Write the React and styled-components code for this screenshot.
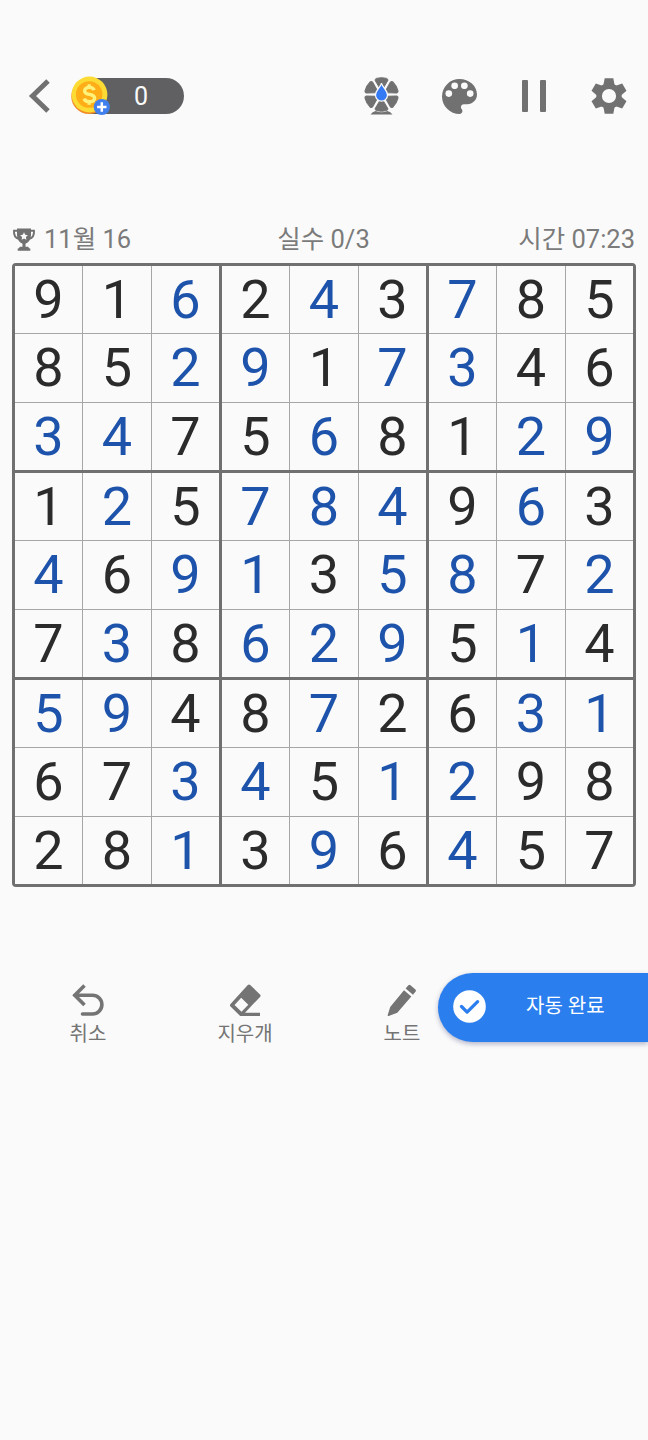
import React from "react";
import styled, { createGlobalStyle } from "styled-components";

const GlobalStyle = createGlobalStyle`
  * { box-sizing: border-box; }
  body { margin: 0; background: #fafafa; }
`;

const GRAY = "#717171";
const FONT = `Roboto, "Noto Sans CJK KR", sans-serif`;

const Screen = styled.main`
  width: 648px;
  min-height: 1440px;
  padding-top: 76px;
  background: #fafafa;
  font-family: ${FONT};
  color: ${GRAY};
`;

const Header = styled.header`
  display: flex;
  align-items: center;
  justify-content: space-between;
  height: 40px;
  padding: 0 21px 0 28px;
`;

const HeaderGroup = styled.div`
  display: flex;
  align-items: center;
  gap: ${(p) => p.$gap}px;
`;

const IconButton = styled.button`
  display: flex;
  align-items: center;
  justify-content: center;
  width: ${(p) => p.$width}px;
  height: 40px;
  padding: 0;
  border: 0;
  background: none;
  color: inherit;
  svg { display: block; flex: none; }
`;

const CoinPill = styled.div`
  display: flex;
  align-items: center;
  width: 114px;
  height: 40px;
`;

const CoinIcon = styled.svg`
  position: relative;
  flex: none;
  width: 41px;
  height: 42px;
`;

const CoinCount = styled.span`
  flex: 1;
  height: 36px;
  margin-left: -22px;
  padding-left: 45px;
  border-radius: 0 18px 18px 0;
  background: #606062;
  color: #fafafa;
  font-size: 25px;
  line-height: 38px;
`;

const StatusRow = styled.section`
  display: grid;
  grid-template-columns: 1fr auto 1fr;
  align-items: center;
  height: 36px;
  margin: 105px 13px 6px 12px;
  font-size: 25.5px;
  line-height: 37px;
`;

const Status = styled.div`
  display: flex;
  align-items: center;
  justify-content: ${(p) => p.$align || "flex-start"};
  gap: 8px;
  white-space: pre;
  color: #7b7b7b;
`;

const Board = styled.section`
  display: grid;
  grid-template-columns: repeat(3, 204px);
  grid-template-rows: repeat(3, 204px);
  gap: 3px;
  width: 624px;
  height: 624px;
  margin: 0 12px;
  border: 3px solid #707070;
  border-radius: 4px;
  background: #707070;
`;

const Box = styled.div`
  display: grid;
  grid-template-columns: 67px 68px 67px;
  grid-template-rows: 67px 68px 67px;
  gap: 1px;
  background: #a6a6a6;
`;

const Cell = styled.div`
  background: #fafafa;
  color: ${(p) => (p.$filled ? "#1d53ab" : "#2b2b2b")};
  font-size: 54px;
  line-height: 68px;
  height: 100%;
  overflow: hidden;
  text-align: center;
`;

const Toolbar = styled.nav`
  position: relative;
  display: grid;
  grid-template-columns: repeat(3, 157px);
  height: 69px;
  margin-top: 86px;
  padding-left: 9.5px;
`;

const Tool = styled.button`
  display: flex;
  flex-direction: column;
  align-items: center;
  padding: 11px 0 0;
  border: 0;
  background: none;
  color: #747474;
  font-family: inherit;
  font-size: 20px;
  line-height: 28px;
  svg { display: block; margin-bottom: 4px; }
`;

const AutoComplete = styled.button`
  position: absolute;
  right: 0;
  top: 0;
  display: flex;
  align-items: center;
  width: 210px;
  height: 69px;
  padding: 0 0 2px 15px;
  gap: 40px;
  border: 0;
  border-radius: 35px 0 0 35px;
  background: #2a7eee;
  box-shadow: 0 2px 5px rgba(40, 50, 110, 0.35);
  color: #fff;
  font-family: inherit;
  font-size: 20px;
  line-height: 28px;
  white-space: nowrap;
`;

const AutoLabel = styled.span`
  padding-bottom: 1px;
`;

const BackIcon = () => (
  <svg width="22" height="36" viewBox="0 0 22 36" fill="none" stroke="currentColor" strokeWidth="5">
    <path d="M20 3 4.5 18 20 33" />
  </svg>
);

const Coin = () => (
  <CoinIcon viewBox="0 0 41 42">
    <circle cx="18.800" cy="21.500" r="17.500" fill="#f28c28" />
    <circle cx="19.500" cy="19.500" r="17.900" fill="#fddb35" />
    <circle cx="19.200" cy="19.500" r="13.300" fill="#ffae17" />
    <path
      d="M24.200 15.200c-.8-2-2.700-2.800-4.800-2.800-2.800 0-4.800 1.300-4.800 3.500 0 5 10 2.100 10 7.200 0 2.400-2.200 3.700-5.100 3.700-2.600 0-4.600-1.100-5.400-3.200M19.200 9.300v3.200M19.200 26.600v3.200"
      fill="none"
      stroke="#fff27b"
      strokeWidth="3.4"
    />
    <circle cx="31.800" cy="32" r="8.100" fill="#3f7fee" />
    <path d="M27.100 32h9.400M31.800 27.300v9.400" stroke="#fff" strokeWidth="2.500" />
  </CoinIcon>
);

const petal = "M-1.8-6.4-6.3-14Q-6.6-15.6-5.2-16.1 0-17.500 5.200-16.100 6.600-15.600 6.300-14L1.800-6.400Z";

const FanIcon = () => (
  <svg width="36" height="40" viewBox="-17.500 -18.500 36 40">
    {[0, 60, 120, 180, 240, 300].map((a) => (
      <path key={a} d={petal} fill="currentColor" stroke="currentColor" strokeWidth="1" strokeLinejoin="round" transform={`rotate(${a})`} />
    ))}
    <path d="M-11 20Q-9 17-6 16.500 0 19 6 16.500 9 17 11 20Z" fill="currentColor" />
    <path d="M0-11.300C1-6.800 6-4.200 6 .6A6 6 0 0 1-6 .6C-6-4.200-1-6.800 0-11.300Z" fill="#347af5" stroke="#fafafa" strokeWidth="1.200" />
  </svg>
);

const PaletteIcon = () => (
  <svg width="35" height="35" viewBox="3 3 18 18" fill="currentColor">
    <path d="M12 3a9 9 0 0 0 0 18c.83 0 1.5-.67 1.5-1.5 0-.39-.15-.74-.39-1.01-.23-.26-.38-.61-.38-.99 0-.83.67-1.5 1.5-1.5H16c2.76 0 5-2.24 5-5 0-4.42-4.03-8-9-8zm-5.5 9c-.83 0-1.5-.67-1.5-1.5S5.67 9 6.5 9 8 9.67 8 10.5 7.33 12 6.5 12zm3-4C8.67 8 8 7.33 8 6.5S8.67 5 9.5 5s1.5.67 1.5 1.5S10.33 8 9.5 8zm5 0c-.83 0-1.5-.67-1.5-1.5S13.67 5 14.5 5s1.5.67 1.5 1.5S15.33 8 14.5 8zm3 4c-.83 0-1.5-.67-1.5-1.5S16.67 9 17.5 9s1.5.67 1.5 1.5-.67 1.5-1.5 1.5z" />
    <g fill="#fafafa">
      <circle cx="6.500" cy="10.500" r="1.700" />
      <circle cx="9.500" cy="6.500" r="1.700" />
      <circle cx="14.500" cy="6.500" r="1.700" />
      <circle cx="17.500" cy="10.500" r="1.700" />
    </g>
  </svg>
);

const PauseIcon = () => (
  <svg width="26" height="32" viewBox="0 0 26 32" fill="currentColor">
    <rect width="6" height="32" rx="1" />
    <rect x="18" width="6" height="32" rx="1" />
  </svg>
);

const GearIcon = () => (
  <svg width="36" height="36" viewBox="-18 -18 36 36" fill="currentColor">
    {[0, 60, 120, 180, 240, 300].map((a) => (
      <path key={a} d="M-4.3-17.7H4.3L5.6-11H-5.6Z" transform={`rotate(${a})`} />
    ))}
    <circle r="9.9" fill="none" stroke="currentColor" strokeWidth="5.6" />
  </svg>
);

const TrophyIcon = () => (
  <svg width="24" height="24" viewBox="0 0 24 24">
    <path d="M5.5 2.8H2q-.5 6.7 5 8.2M18.500 2.800H22q.5 6.700-5 8.200" fill="none" stroke={GRAY} strokeWidth="1.9" />
    <path d="M5 .5h14v7q-.7 6.500-5.500 8.200v3.100h2.500l1.500 1.800h.8v2.200H5.700v-2.200h.8l1.500-1.800h2.500v-3.100Q5.700 14 5 7.500Z" fill={GRAY} />
    <path d="m12 4.300 1.200 2.500 2.700.4-2 1.900.5 2.700-2.400-1.300-2.400 1.300.5-2.700-2-1.900 2.700-.4Z" fill="#fafafa" />
  </svg>
);

const UndoIcon = () => (
  <svg width="32" height="32" viewBox="0 0 32 32" fill="none" stroke="currentColor" strokeWidth="3.6">
    <path d="M12.500 1.500 2.800 11.200 12.500 21" />
    <path d="M3 11.200H20.500a9.200 9.200 0 0 1 0 18.800H10.500" strokeLinecap="round" />
  </svg>
);

const EraserIcon = () => (
  <svg width="32" height="32" viewBox="0 0 32 32" fill="currentColor">
    <path
      fillRule="evenodd"
      d="M18.800 1q1.200-1.200 2.400 0l9.800 9.500q1.200 1.200 0 2.400L16 28.700H31v3.300H11.200L1.500 22.500q-1.200-1.200 0-2.500ZM12.200 13.800 5.500 21 12.500 27.800 19.300 20.800Z"
    />
  </svg>
);

const PencilIcon = () => (
  <svg width="32" height="32" viewBox="0 0 32 32" fill="currentColor">
    <path d="m18 6.300 7.300 6.300L11.300 28.800 2.700 32q-1.200.2-1-1L4.200 23ZM19.600 4.500l2.800-3.200q1-1 2.100-.1l4.900 4.300q1 1 .2 2.100L27 10.800Z" />
  </svg>
);

const CheckIcon = () => (
  <svg width="33" height="33" viewBox="0 0 33 33">
    <circle cx="16.500" cy="16.500" r="16.300" fill="#fff" />
    <path d="m8.500 16.500 5.600 5.600 10.500-10.400" fill="none" stroke="#2a7eee" strokeWidth="3.300" strokeLinecap="round" strokeLinejoin="round" />
  </svg>
);

// Digits entered by the player are prefixed with a dot; the rest are givens.
const ROWS = [
  "9 1 .6 2 .4 3 .7 8 5",
  "8 5 .2 .9 1 .7 .3 4 6",
  ".3 .4 7 5 .6 8 1 .2 .9",
  "1 .2 5 .7 .8 .4 9 .6 3",
  ".4 6 .9 .1 3 .5 .8 7 .2",
  "7 .3 8 .6 .2 .9 5 .1 4",
  ".5 .9 4 8 .7 2 6 .3 .1",
  "6 7 .3 .4 5 .1 .2 9 8",
  "2 8 .1 3 .9 6 .4 5 7",
].map((row) => row.split(" "));

const INDEXES = [0, 1, 2, 3, 4, 5, 6, 7, 8];

const SudokuBoard = () => (
  <Board>
    {INDEXES.map((box) => (
      <Box key={box}>
        {INDEXES.map((i) => {
          const value = ROWS[Math.floor(box / 3) * 3 + Math.floor(i / 3)][(box % 3) * 3 + (i % 3)];
          return (
            <Cell key={i} $filled={value.startsWith(".")}>
              {value.replace(".", "")}
            </Cell>
          );
        })}
      </Box>
    ))}
  </Board>
);

export default function App() {
  return (
    <>
      <GlobalStyle />
      <Screen>
        <Header>
          <HeaderGroup $gap={20}>
            <IconButton $width={22} aria-label="뒤로">
              <BackIcon />
            </IconButton>
            <CoinPill>
              <Coin />
              <CoinCount>0</CoinCount>
            </CoinPill>
          </HeaderGroup>
          <HeaderGroup $gap={40}>
            <IconButton $width={36} aria-label="배경">
              <FanIcon />
            </IconButton>
            <IconButton $width={38} aria-label="테마">
              <PaletteIcon />
            </IconButton>
            <IconButton $width={33} aria-label="일시정지">
              <PauseIcon />
            </IconButton>
            <IconButton $width={36} aria-label="설정">
              <GearIcon />
            </IconButton>
          </HeaderGroup>
        </Header>
        <StatusRow>
          <Status>
            <TrophyIcon />
            11월 16
          </Status>
          <Status $align="center">실수 0/3</Status>
          <Status $align="flex-end">시간 07:23</Status>
        </StatusRow>
        <SudokuBoard />
        <Toolbar>
          <Tool>
            <UndoIcon />
            취소
          </Tool>
          <Tool>
            <EraserIcon />
            지우개
          </Tool>
          <Tool>
            <PencilIcon />
            노트
          </Tool>
          <AutoComplete>
            <CheckIcon />
            <AutoLabel>자동 완료</AutoLabel>
          </AutoComplete>
        </Toolbar>
      </Screen>
    </>
  );
}
